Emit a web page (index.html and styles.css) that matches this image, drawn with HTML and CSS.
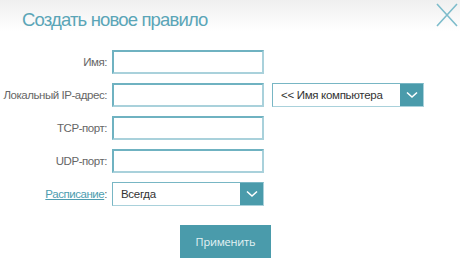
FILE: index.html
```html
<!DOCTYPE html>
<html lang="ru">
<head>
    <meta charset="UTF-8">
    <title>Создать новое правило</title>
    <link rel="stylesheet" href="styles.css">
</head>
<body>
    <div class="dialog">
        <header class="head">
            <h1 class="title">Создать новое правило</h1>
            <span class="close">
                <svg width="22" height="24" viewBox="0 0 22 24"><path d="M1 1 L21 23 M21 1 L1 23" stroke="#7dbccb" stroke-width="1.6" fill="none"/></svg>
            </span>
        </header>

        <form class="rule">
            <label class="lbl">Имя:</label>
            <input class="field" type="text">
            <span></span>

            <label class="lbl">Локальный IP-адрес:</label>
            <input class="field" type="text">
            <div class="select wide">
                <span class="val">&lt;&lt; Имя компьютера</span>
                <span class="arrow"><svg width="12" height="8" viewBox="0 0 12 8"><path d="M1 1.5 L6 6 L11 1.5" stroke="#fff" stroke-width="1.6" fill="none"/></svg></span>
            </div>

            <label class="lbl">TCP-порт:</label>
            <input class="field" type="text">
            <span></span>

            <label class="lbl">UDP-порт:</label>
            <input class="field" type="text">
            <span></span>

            <label class="lbl"><a href="#">Расписание</a>:</label>
            <div class="select">
                <span class="val">Всегда</span>
                <span class="arrow"><svg width="12" height="8" viewBox="0 0 12 8"><path d="M1 1.5 L6 6 L11 1.5" stroke="#fff" stroke-width="1.6" fill="none"/></svg></span>
            </div>
            <span></span>
        </form>

        <div class="actions">
            <button class="apply" type="button">Применить</button>
        </div>
    </div>
</body>
</html>
```

FILE: styles.css
```css
body{
    margin: 0;
    font-family: "Liberation Sans", Arial, sans-serif;
    background: #fff;
}
.dialog{
    width: 460px;
    height: 264px;
    background: linear-gradient(#efefef 0px, #ffffff 32px);
}
.head{
    display: flex;
    justify-content: space-between;
    padding: 9px 2px 0 22px;
    height: 42px;
    box-sizing: border-box;
}
.title{
    margin: 0;
    font-size: 18.5px;
    letter-spacing: -0.85px;
    font-weight: normal;
    color: #5aa5b7;
    line-height: 22px;
}
.close{
    margin-top: -6px;
}
.rule{
    display: grid;
    grid-template-columns: 108px 152px 152px;
    grid-auto-rows: 24px;
    row-gap: 9px;
    margin-top: 8px;
}
.lbl{
    font-size: 11.5px;
    letter-spacing: -0.45px;
    color: #666;
    text-align: right;
    line-height: 24px;
    padding-right: 1px;
    white-space: nowrap;
}
.lbl a{
    color: #4e9db0;
}
.field{
    margin: 0 0 0 4px;
    width: 152px;
    height: 24px;
    box-sizing: border-box;
    border: 2px solid #a9d1db;
    border-top-color: #6fb2c1;
    border-left-color: #6fb2c1;
    background: #fff;
}
.select{
    margin-left: 4px;
    width: 152px;
    height: 24px;
    box-sizing: border-box;
    display: flex;
    border: 1px solid #a9d1db;
    border-top-color: #78b6c4;
    border-left-color: #78b6c4;
    background: #fff;
}
.select.wide{
    margin-left: 12px;
}
.val{
    flex: 1;
    padding-left: 8px;
    font-size: 11.5px;
    letter-spacing: -0.3px;
    color: #333;
    line-height: 22px;
}
.arrow{
    width: 23px;
    background: #4a9bab;
    display: flex;
    align-items: center;
    justify-content: center;
}
.actions{
    padding: 19px 0 0 180px;
}
.apply{
    width: 91px;
    height: 33px;
    border: none;
    background: #4a9bab;
    color: #e6f3f5;
    font-family: "Open Sans", sans-serif;
    font-size: 11px;
    letter-spacing: -0.2px;
}
```
